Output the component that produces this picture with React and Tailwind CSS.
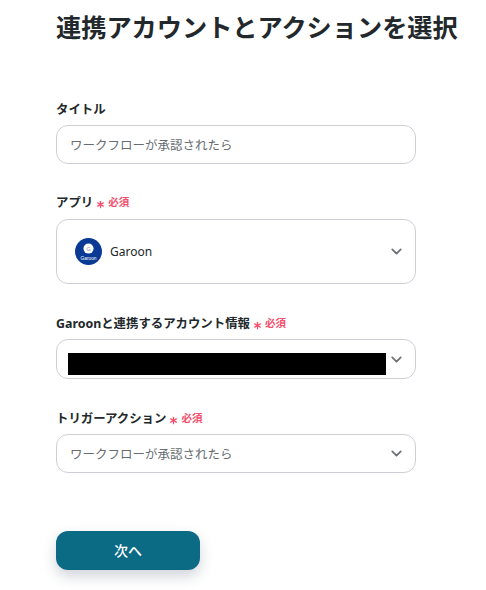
import React from 'react';
import { Asterisk, ChevronDown } from 'lucide-react';

const Required = () => (
    <span className="flex items-center ml-[1px] text-[#f4506e]">
        <Asterisk className="h-[13px] w-[13px] mt-[3px]" strokeWidth={2.3} />
        <span className="text-[10.5px] font-bold ml-[1px]">必須</span>
    </span>
);

const Label = ({ children, required }) => (
    <div className="flex items-center h-[20px] pt-[2px] text-[12.4px] font-bold text-[#22282b]">
        <span>{children}</span>
        {required && <Required />}
    </div>
);

const Chevron = () => <ChevronDown className="h-[17px] w-[17px] text-[#6d7276]" strokeWidth={2.5} />;

const GaroonLogo = () => (
    <svg viewBox="0 0 28 28" className="h-[27px] w-[27px]">
        <circle cx="14" cy="14" r="14" fill="#0b3a94" />
        <circle cx="14" cy="11" r="5.2" fill="#ffffff" />
        <text x="14" y="13" textAnchor="middle" fontSize="5.6" fill="#7f93bd" fontFamily="Liberation Sans">G</text>
        <text x="14" y="23" textAnchor="middle" fontSize="5" fill="#ffffff" fontFamily="Liberation Sans">Garoon</text>
    </svg>
);

export default function App() {
    return (
        <div className="min-h-[590px] bg-white pl-[56px] font-['Noto_Sans','Noto_Sans_CJK_JP',sans-serif] overflow-hidden">
            <h1 className="pt-[9px] text-[25.2px] leading-[36px] font-bold text-[#22282b] whitespace-nowrap">
                連携アカウントとアクションを選択
            </h1>

            <div className="w-[360px] mt-[54px]">
                <Label>タイトル</Label>
                <div className="mt-[6px] h-[39px] flex items-center px-[13px] pt-[4px] rounded-[12px] border border-[#ccd0d6] text-[12.5px] text-[#666c70]">
                    ワークフローが承認されたら
                </div>

                <div className="mt-[28px]">
                    <Label required>アプリ</Label>
                </div>
                <div className="mt-[7px] h-[65px] flex items-center justify-between pl-[18px] pr-[10px] rounded-[12px] border border-[#ccd0d6]">
                    <div className="flex items-center gap-[8px]">
                        <GaroonLogo />
                        <span className="text-[12px] text-[#22282b]">Garoon</span>
                    </div>
                    <Chevron />
                </div>

                <div className="mt-[29px]">
                    <Label required>Garoonと連携するアカウント情報</Label>
                </div>
                <div className="mt-[6px] h-[40px] flex items-center justify-between pl-[11px] pr-[10px] rounded-[12px] border border-[#ccd0d6]">
                    <div className="w-[318px] h-[22px] mt-[10px] bg-black" />
                    <Chevron />
                </div>

                <div className="mt-[29px]">
                    <Label required>トリガーアクション</Label>
                </div>
                <div className="mt-[6px] h-[39px] flex items-center justify-between pl-[13px] pr-[10px] rounded-[12px] border border-[#ccd0d6] text-[12.5px] text-[#666c70]">
                    <span className="pt-[3px]">ワークフローが承認されたら</span>
                    <Chevron />
                </div>
            </div>

            <button className="mt-[58px] w-[144px] h-[39px] rounded-[12px] bg-[#0b6a84] text-white text-[14px] font-medium shadow-[0_6px_14px_rgba(40,60,80,0.22)]">
                次へ
            </button>
        </div>
    );
}
